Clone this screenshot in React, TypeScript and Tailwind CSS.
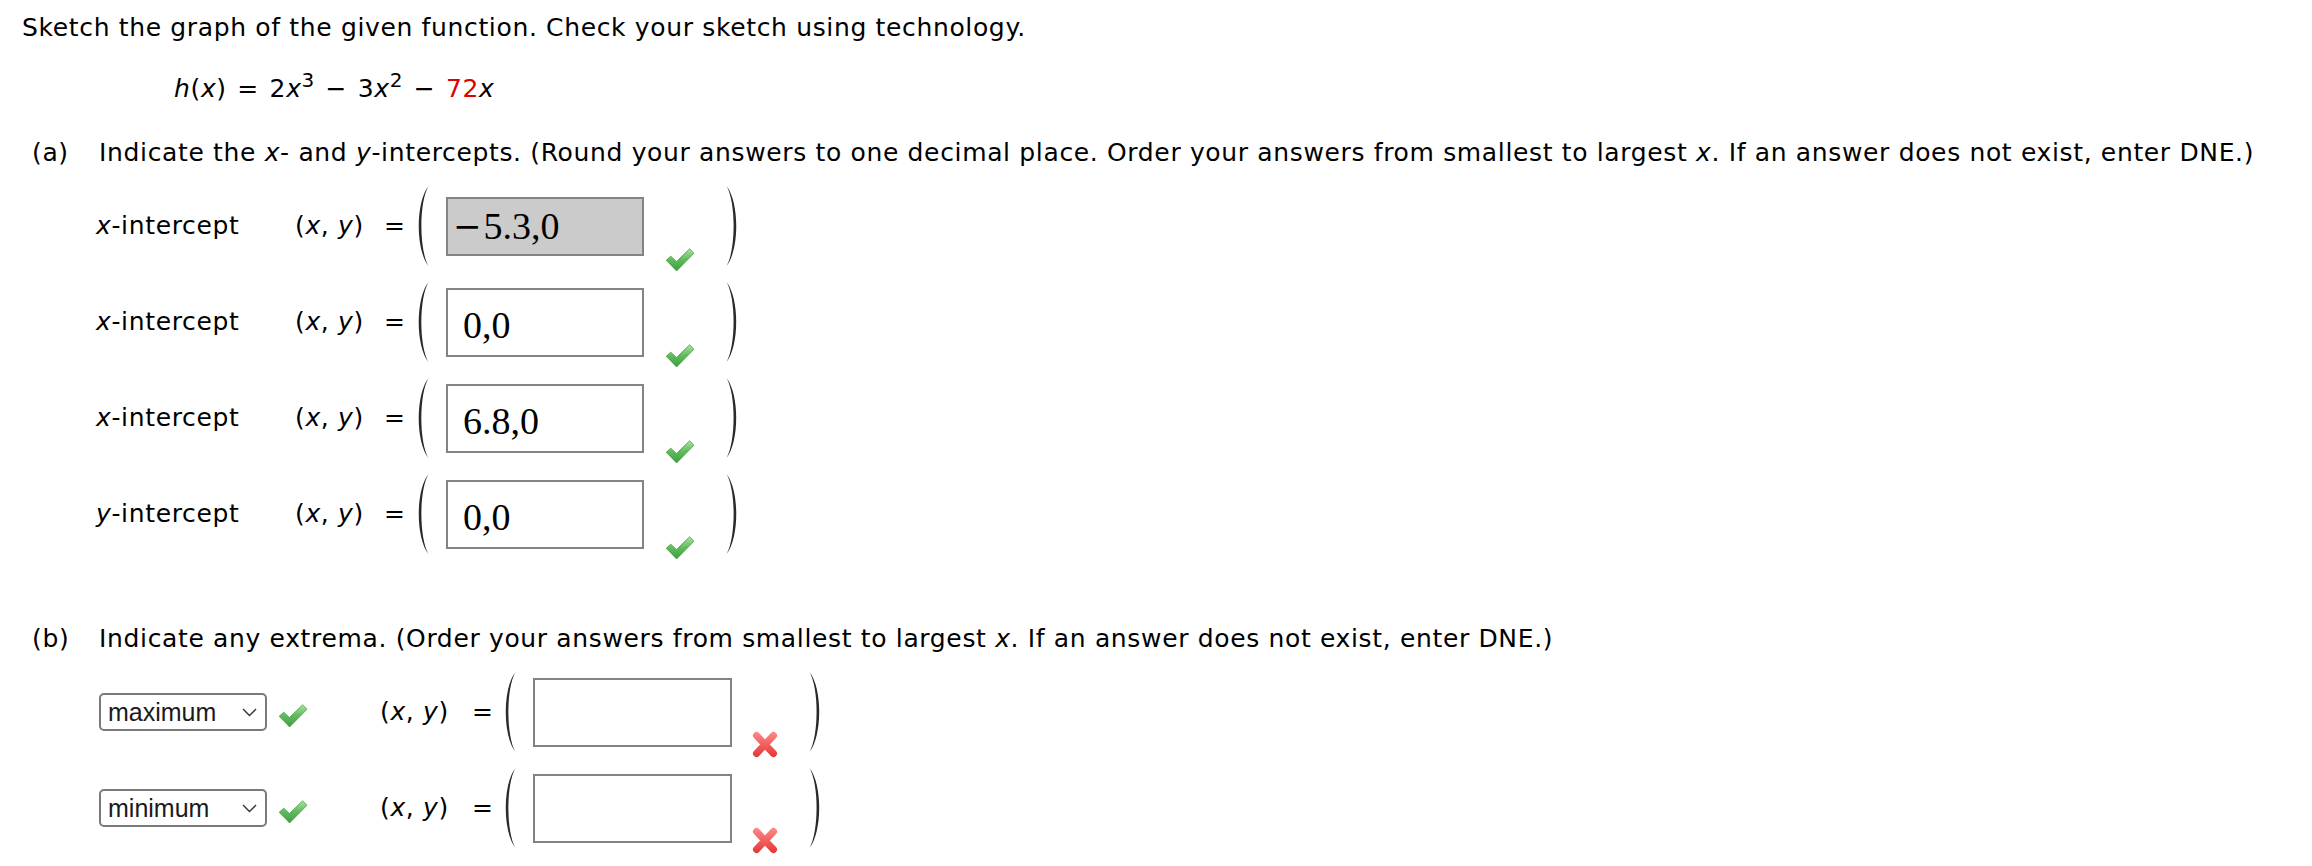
import React from 'react';

const Check = () => (
    <svg width="30" height="25" viewBox="0 0 30 25">
        <defs>
            <linearGradient id="chk" x1="0" y1="0" x2="0" y2="1">
                <stop offset="0" stopColor="#a9e4a2" />
                <stop offset="0.45" stopColor="#62bf60" />
                <stop offset="1" stopColor="#3f9c3f" />
            </linearGradient>
        </defs>
        <path
            d="M1.2 13.2 L5.8 9.2 L11.4 14.6 L24.6 1.8 L29 6.2 L11.6 24 Z"
            fill="url(#chk)"
            stroke="#4a9a48"
            strokeWidth="0.8"
            strokeLinejoin="round"
        />
    </svg>
);

const Cross = () => (
    <svg width="26" height="27" viewBox="0 0 26 27">
        <defs>
            <linearGradient id="crs" x1="0" y1="0" x2="0" y2="27" gradientUnits="userSpaceOnUse">
                <stop offset="0" stopColor="#ff8d8d" />
                <stop offset="1" stopColor="#e53232" />
            </linearGradient>
        </defs>
        <path d="M4.5 4.5 L21.5 22.5 M21.5 4.5 L4.5 22.5" stroke="url(#crs)" strokeWidth="7" strokeLinecap="round" />
    </svg>
);

// tall parenthesis around the answer box
const Paren = ({ right }: { right?: boolean }) => (
    <svg width="17" height="82" viewBox="0 0 17 82">
        {right ? (
            <path d="M1.5 1 C14.5 17, 14.5 65, 1.5 81 C11 65, 11 17, 1.5 1 Z" fill="#2a2a2a" />
        ) : (
            <path d="M15.5 1 C2.5 17, 2.5 65, 15.5 81 C6 65, 6 17, 15.5 1 Z" fill="#2a2a2a" />
        )}
    </svg>
);

const Chevron = () => (
    <svg width="15" height="9" viewBox="0 0 15 9">
        <path d="M1 1 L7.5 7.5 L14 1" fill="none" stroke="#333" strokeWidth="1.4" />
    </svg>
);

const XY = () => (
    <span>
        (<i>x</i>, <i>y</i>)
    </span>
);

type InterceptRow = { axis: string; value: string; neg?: boolean; focused?: boolean };

const rows: InterceptRow[] = [
    { axis: 'x', value: '5.3,0', neg: true, focused: true },
    { axis: 'x', value: '0,0' },
    { axis: 'x', value: '6.8,0' },
    { axis: 'y', value: '0,0' },
];

const extrema = ['maximum', 'minimum'];

export default function App() {
    return (
        <div className="min-h-screen bg-white pl-[22px] pt-[13px] font-['DejaVu_Sans',sans-serif] text-[25px] leading-[30px] tracking-[0.65px] text-black">
            <div>Sketch the graph of the given function. Check your sketch using technology.</div>

            <div className="ml-[152px] mt-[31px]">
                <i>h</i>(<i>x</i>)<span className="mx-[2px]"> = </span>2<i>x</i>
                <sup className="text-[20px]">3</sup>
                <span className="mx-[2px]"> &minus; </span>3<i>x</i>
                <sup className="text-[20px]">2</sup>
                <span className="mx-[2px]"> &minus; </span>
                <span className="text-[#e00000]">72</span>
                <i>x</i>
            </div>

            <div className="mt-[34px] flex">
                <div className="ml-[10px] w-[67px]">(a)</div>
                <div>
                    Indicate the <i>x</i>- and <i>y</i>-intercepts. (Round your answers to one decimal place. Order
                    your answers from smallest to largest <i>x</i>. If an answer does not exist, enter DNE.)
                </div>
            </div>

            <div className="mt-[10px] ml-[74px]">
                {rows.map((r, i) => (
                    <div key={i} className="flex h-[96px] items-center">
                        <div className="w-[199px]">
                            <i>{r.axis}</i>-intercept
                        </div>
                        <div className="w-[89px]">
                            <XY />
                        </div>
                        <div className="w-[29px]">=</div>
                        <Paren />
                        <div
                            className={`ml-[16px] flex w-[198px] items-center border-2 border-[#838383] font-['Liberation_Serif',serif] text-[38px] leading-[42px] tracking-normal ${
                                r.focused ? 'h-[59px] bg-[#cbcbcb] pl-[5px]' : 'h-[69px] bg-white pl-[15px] pt-[6px]'
                            }`}
                        >
                            {r.neg && <span className="mr-[2px] font-['DejaVu_Serif',serif] text-[34px]">&minus;</span>}
                            {r.value}
                        </div>
                        <div className="ml-[21px] mt-[66px]">
                            <Check />
                        </div>
                        <div className="ml-[30px]">
                            <Paren right />
                        </div>
                    </div>
                ))}
            </div>

            <div className="mt-[62px] flex">
                <div className="ml-[10px] w-[67px]">(b)</div>
                <div>
                    Indicate any extrema. (Order your answers from smallest to largest <i>x</i>. If an answer does not
                    exist, enter DNE.)
                </div>
            </div>

            <div className="mt-[10px] ml-[77px]">
                {extrema.map((e) => (
                    <div key={e} className="flex h-[96px] items-center">
                        <div className="flex h-[38px] w-[168px] items-center justify-between rounded-[5px] border-2 border-[#7a7a7a] pl-[7px] pr-[8px] font-['Liberation_Sans',sans-serif] text-[25px] tracking-normal text-[#1a1a1a]">
                            <span>{e}</span>
                            <Chevron />
                        </div>
                        <div className="ml-[11px] mt-[6px]">
                            <Check />
                        </div>
                        <div className="ml-[72px] w-[92px]">
                            <XY />
                        </div>
                        <div className="w-[28px]">=</div>
                        <Paren />
                        <div className="ml-[16px] h-[69px] w-[199px] border-2 border-[#838383] bg-white" />
                        <div className="ml-[20px] mt-[64px]">
                            <Cross />
                        </div>
                        <div className="ml-[30px]">
                            <Paren right />
                        </div>
                    </div>
                ))}
            </div>
        </div>
    );
}
